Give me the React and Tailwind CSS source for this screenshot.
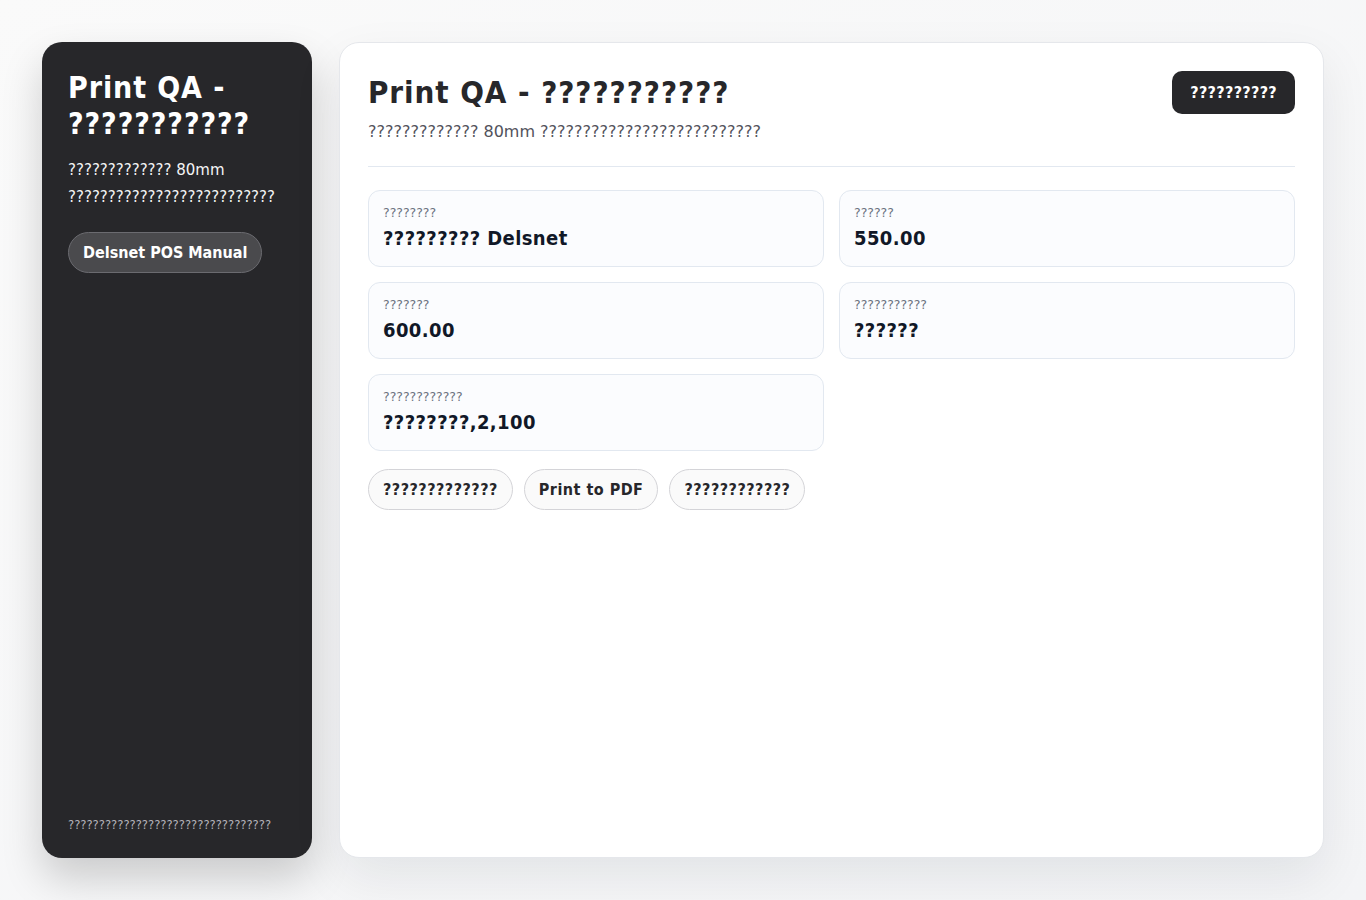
import React from "react";

const facts = [
  { label: "????????", value: "????????? Delsnet" },
  { label: "??????", value: "550.00" },
  { label: "???????", value: "600.00" },
  { label: "???????????", value: "??????" },
  { label: "????????????", value: "????????,2,100" },
];

const actions = ["?????????????", "Print to PDF", "????????????"];

// bold text sits closer to Tahoma, so use the condensed cut for it
const boldFont = { fontFamily: '"DejaVu Sans Condensed", "DejaVu Sans", sans-serif' };

const App = () => {
  return (
    <div
      className="min-h-screen bg-gradient-to-br from-[#fafafa] to-[#f3f4f6] p-[42px] flex gap-[27px] text-[#27272a]"
      style={{ fontFamily: '"DejaVu Sans", Verdana, sans-serif' }}
    >
      {/* Sidebar */}
      <aside className="w-[270px] shrink-0 h-[816px] bg-[#27272a] rounded-[20px] shadow-[0_20px_40px_rgba(0,0,0,0.18)] px-[26px] pt-[28px] pb-[24px] flex flex-col text-white">
        <h2 style={boldFont} className="text-[30px] font-bold leading-[36px] tracking-[0.03em]">
          Print QA - ???????????
        </h2>
        <p className="mt-[15px] text-[15px] leading-[27px] text-[#f4f4f5]">
          ????????????? 80mm ??????????????????????????
        </p>
        <div className="mt-[21px]">
          <button
            style={boldFont}
            className="h-[41px] px-[14px] rounded-full bg-[#4a4a4d] border border-[#6b6b70] text-[16px] font-bold text-white"
          >
            Delsnet POS Manual
          </button>
        </div>
        <div className="mt-auto text-[11.6px] text-[#b4b4bb]">
          ?????????????????????????????????
        </div>
      </aside>

      {/* Main */}
      <main className="flex-1 h-[816px] bg-white rounded-[20px] border border-[#e5e7eb] shadow-[0_20px_50px_rgba(15,23,42,0.08)] px-[28px] pt-[28px]">
        <div className="flex items-start justify-between pb-[22px] border-b border-[#e2e8f0]">
          <div>
            <h1 style={boldFont} className="text-[31px] font-bold leading-[42px] tracking-[0.03em]">
              Print QA - ???????????
            </h1>
            <p className="mt-[7px] text-[16px] text-[#52525b]">
              ????????????? 80mm ??????????????????????????
            </p>
          </div>
          <button
            style={boldFont}
            className="h-[43px] px-[18px] rounded-[10px] bg-[#27272a] text-white text-[16px] font-bold tracking-[0.02em]"
          >
            ??????????
          </button>
        </div>

        <div className="mt-[23px] grid grid-cols-2 gap-[15px]">
          {facts.map((f) => (
            <div
              key={f.label + f.value}
              className="h-[77px] rounded-[12px] border border-[#e2e8f0] bg-[#fbfcfe] px-[14px] pt-[13px]"
            >
              <div className="text-[12.5px] leading-[18px] text-[#6b7280]">{f.label}</div>
              <div
                style={boldFont}
                className="mt-[2px] text-[20px] leading-[28px] font-bold tracking-[0.02em] text-[#111827]"
              >
                {f.value}
              </div>
            </div>
          ))}
        </div>

        <div className="mt-[18px] flex gap-[11px]">
          {actions.map((a) => (
            <button
              key={a}
              style={boldFont}
              className="h-[41px] px-[14px] rounded-full border border-[#d4d4d8] bg-[#fafafa] text-[16px] font-bold tracking-[0.03em] text-[#27272a]"
            >
              {a}
            </button>
          ))}
        </div>
      </main>
    </div>
  );
};

export default App;
